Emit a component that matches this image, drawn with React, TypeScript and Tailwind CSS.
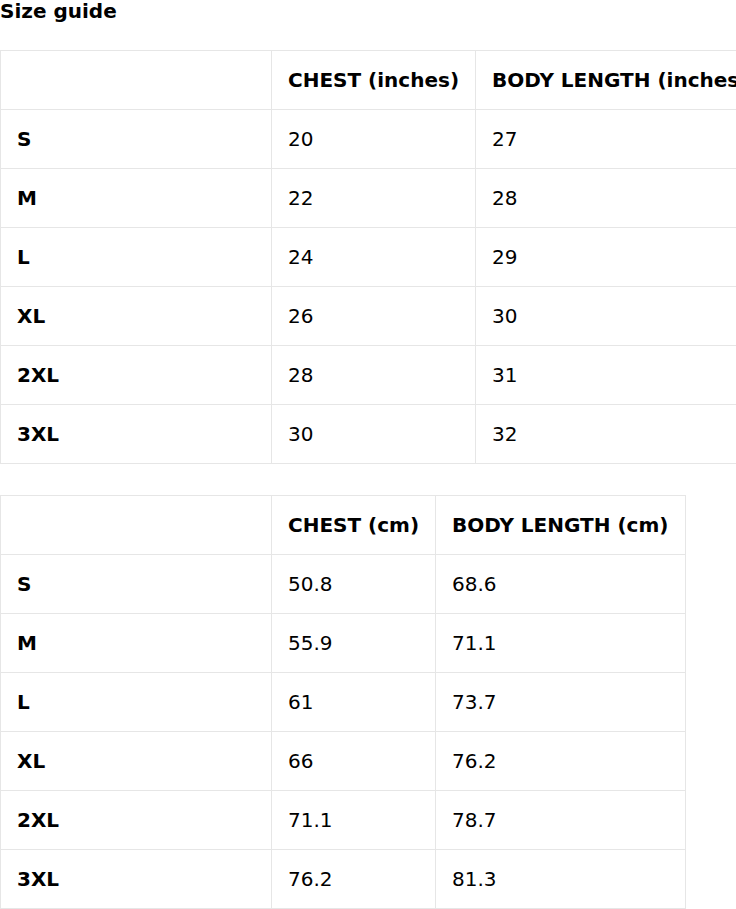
const inches = [
  ['S', '20', '27'],
  ['M', '22', '28'],
  ['L', '24', '29'],
  ['XL', '26', '30'],
  ['2XL', '28', '31'],
  ['3XL', '30', '32'],
];

const cm = [
  ['S', '50.8', '68.6'],
  ['M', '55.9', '71.1'],
  ['L', '61', '73.7'],
  ['XL', '66', '76.2'],
  ['2XL', '71.1', '78.7'],
  ['3XL', '76.2', '81.3'],
];

const SizeTable = ({ head, rows, w2, w3, tw }: { head: string[]; rows: string[][]; w2: string; w3: string; tw: string }) => {
  const cell = 'border border-[#e6e6e6] px-4 h-[59px] text-left align-middle whitespace-nowrap';
  return (
    <table className={`border-collapse table-fixed shrink-0 ${tw}`}>
      <thead>
        <tr>
          <th className={`${cell} w-[271px]`}></th>
          <th className={`${cell} font-bold ${w2}`}>{head[0]}</th>
          <th className={`${cell} font-bold ${w3}`}>{head[1]}</th>
        </tr>
      </thead>
      <tbody>
        {rows.map((r) => (
          <tr key={r[0]}>
            <td className={`${cell} font-bold`}>{r[0]}</td>
            <td className={`${cell} font-normal`}>{r[1]}</td>
            <td className={`${cell} font-normal`}>{r[2]}</td>
          </tr>
        ))}
      </tbody>
    </table>
  );
};

export default function App() {
  return (
    <div className="w-[736px] h-[909px] overflow-hidden bg-white text-black text-[20px] font-['DejaVu_Sans',sans-serif]">
      <h2 className="font-bold text-[20px] leading-[22px] h-[50px]">Size guide</h2>
      <SizeTable head={['CHEST (inches)', 'BODY LENGTH (inches)']} rows={inches} w2="w-[204px]" w3="w-[300px]" tw="w-[775px] min-w-[775px]" />
      <div className="h-[31px]" />
      <SizeTable head={['CHEST (cm)', 'BODY LENGTH (cm)']} rows={cm} w2="w-[164px]" w3="w-[250px]" tw="w-[685px]" />
    </div>
  );
}
